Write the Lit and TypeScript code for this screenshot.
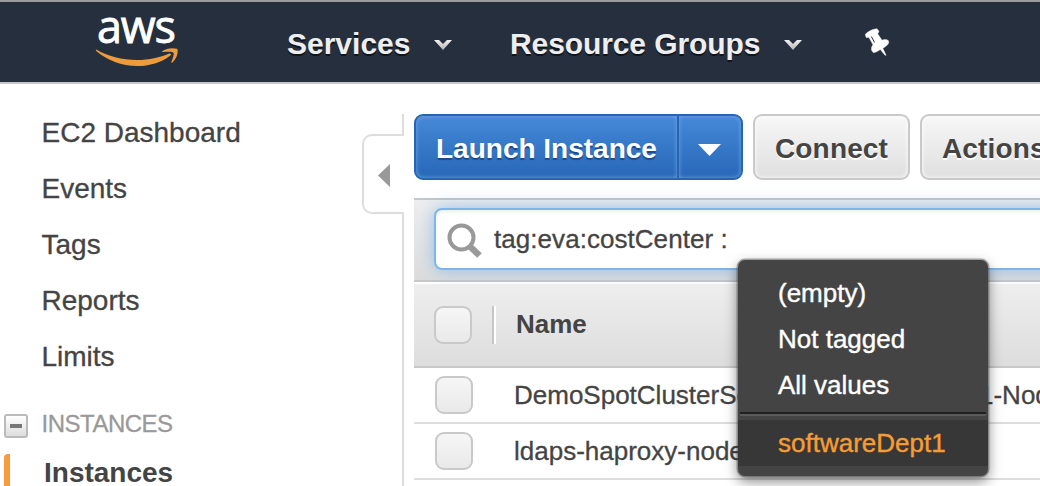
import { LitElement, html, css } from "lit";
import { customElement } from "lit/decorators.js";

const chevron = html`<svg class="chev" width="20" height="12" viewBox="0 0 20 12">
  <defs><linearGradient id="g" x1="0" y1="0" x2="0" y2="1"><stop offset="0" stop-color="#f2f2f2"/><stop offset="1" stop-color="#b2b2b2"/></linearGradient></defs>
  <path d="M1 1h5L10 5 14 1H19L10 11z" fill="url(#g)"/></svg>`;

@customElement("app-root")
export class AppRoot extends LitElement {
  static styles = css`
    :host { display: block; width: 1040px; height: 486px; overflow: hidden; position: relative; background: #fff; color: #444; font: 26px/1 "Liberation Sans", Arial, sans-serif; }
    * { box-sizing: border-box; }
    svg { display: block; flex: none; }
    .nav { height: 84px; background: #262f3e; border-top: 2px solid #9b9a9d; border-bottom: 2px solid #c6c7c9; display: flex; align-items: flex-start; color: #eee; font-weight: bold; font-size: 30px; text-shadow: 0 2px 0 #10151c; white-space: nowrap; }
    .logo { margin: 8px 0 0 92px; overflow: visible; }
    .logo text { font: 400 45px "Open Sans", "Noto Sans", sans-serif; text-shadow: none; stroke: #fff; stroke-width: 0.9px; }
    .navitem { display: flex; height: 30px; margin-top: 27px; }
    .services { margin-left: 105px; width: 223px; }
    .groups { width: 351px; letter-spacing: -0.1px; }
    .navitem span { flex: none; }
    .services span { width: 146px; }
    .groups span { width: 273px; }
    .chev { margin-top: 10px; }
    .pin { margin-top: 24px; }
    .body { display: flex; height: 402px; }
    .side { width: 362px; padding-top: 21px; flex: none; font-size: 28px; }
    .link, .group span, .search span, .name, .rest { -webkit-text-stroke: 0.3px; }
    .link { height: 56px; line-height: 56px; padding-left: 41.5px; }
    .group { display: flex; height: 56px; padding-left: 4px; margin-top: 11px; color: #999; font-size: 24px; letter-spacing: -0.5px; }
    .group span { line-height: 56px; margin-left: 13.500px; }
    .minus { width: 24px; height: 24px; margin-top: 18px; border: 2px solid #bbb; border-radius: 3px; background: linear-gradient(#fff, #ddd); display: flex; align-items: center; justify-content: center; }
    .minus i { width: 12px; height: 4px; background: #777; }
    .active { margin-left: 4px; margin-top: 2px; height: 36px; border-left: 6px solid #f79c3c; border-top-left-radius: 4px; padding-left: 34px; font-weight: bold; line-height: 37px; }
    .split { width: 42px; flex: none; display: flex; flex-direction: column; align-items: flex-end; padding-top: 30px; }
    .rule { width: 2px; background: #ddd; height: 20px; }
    .rule.long { flex: 1; height: auto; }
    .handle { width: 42px; height: 80px; border: 2px solid #ddd; border-right: 0; border-radius: 10px 0 0 10px; padding: 28px 0 0 13px; margin-bottom: -2px; background: #fff; }
    .main { margin-left: 10px; flex: 1; min-width: 0; overflow: hidden; padding-top: 30px; }
    .buttons { display: flex; gap: 11px; height: 84px; font-weight: bold; font-size: 28px; white-space: nowrap; }
    .btn { height: 66px; border: 2px solid #c9c9c9; border-radius: 9px; background: linear-gradient(#f7f7f7, #dfdfdf); box-shadow: inset 0 0 4px #fff; flex: none; line-height: 65px; text-shadow: 0 2px 0 #fff; letter-spacing: 0.15px; }
    .connect { width: 157px; padding-left: 20px; }
    .actions { width: 180px; padding-left: 20px; margin-left: -1px; }
    .launch { width: 329px; display: flex; color: #fff; border-color: #2565b3; background: linear-gradient(#4589d9, #2767b7); text-shadow: 0 2px 1px #1a4a8c; box-shadow: none; margin-right: -1px; letter-spacing: 0; }
    .label { width: 263px; padding-left: 20px; box-shadow: inset 0 0 4px #76a9e2; border-radius: 7px 0 0 7px; border-right: 2px solid #2565b3; }
    .drop { flex: 1; padding: 28px 0 0 19px; box-shadow: inset 0 0 4px #76a9e2; border-radius: 0 7px 7px 0; }
    .filter { height: 84px; border-top: 2px solid #c4c6c8; border-bottom: 2px solid #c8c8c8; background: linear-gradient(#eee, #dcdcdc); padding: 8px 0 0 20px; }
    .search { width: 640px; height: 62px; border: 2px solid #7db5ec; border-radius: 8px; background: #fff; box-shadow: 0 0 18px rgba(115, 172, 230, .7), inset 0 2px 3px #eee; display: flex; }
    .search svg { margin: 12px 0 0 10px; }
    .search span { margin-left: 10px; line-height: 58px; letter-spacing: 0.05px; }
    .head { margin-top: 2px; height: 84px; background: linear-gradient(#eee, #ddd); border-bottom: 2px solid #c8c8c8; padding: 22px 0 0 20px; display: flex; font-weight: bold; }
    .check { width: 38px; height: 38px; border: 2px solid #c9c9c9; border-radius: 9px; background: linear-gradient(#f6f6f6, #e9e9e9); flex: none; }
    .sep { width: 4px; height: 38px; border-left: 2px solid #c6c6c6; background: #fff; margin-left: 20px; }
    .head span { margin-left: 20px; line-height: 36px; }
    .row { height: 56px; border-bottom: 2px solid #ddd; display: flex; padding: 8px 0 0 21px; line-height: 38px; white-space: nowrap; }
    .row .name { margin-left: 41px; width: 465px; flex: none; }
    .menu { position: absolute; left: 738px; top: 260px; width: 250px; height: 216px; border-radius: 7px; background: #444; color: #fff; padding-top: 10px; box-shadow: 0 0 0 1.5px rgba(70, 70, 70, .45), 0 5px 13px rgba(0, 0, 0, .5); }
    .item { height: 46px; line-height: 46px; padding-left: 40px; -webkit-text-stroke: 0.4px; }
    .line { height: 4px; margin: 4px 2px; background: #5a5a5a; border-top: 2px solid #202020; }
    .picked { background: #373737; color: #f79c34; }
  `;

  render() {
    return html`
      <header class="nav">
        <svg class="logo" width="90" height="60" viewBox="92 10 90 60">
          <text x="97" y="42.5" fill="#fff" textLength="79" lengthAdjust="spacing">aws</text>
          <path fill="#ee9b3c" d="M96.2 49.6C108 56.5 122 60 137 60c12 0 23-2.600 32.200-6.500 1.500-.5 2.500.8 1.200 1.900C161.500 62.500 149 66 137.500 66 121.500 66 107 60 96.500 51.200c-.8-.8-1-1.600-.3-1.600z"/>
          <path fill="#ee9b3c" d="M162.500 51c3.500-2.600 9.500-3.600 14.500-2.200 1.600 1.200.8 9.200-4.600 13.700-.7.600-1.400.3-1.100-.5 1.200-3 3-7.700 2.200-9.100-1-1.500-6-1-10.600-.8-.9 0-1.100-.6-.4-1.100z"/>
        </svg>
        <div class="navitem services"><span>Services</span>${chevron}</div>
        <div class="navitem groups"><span>Resource Groups</span>${chevron}</div>
        <svg class="pin" width="30" height="32" viewBox="861 26 30 32">
          <path fill="#fff" stroke="#fff" stroke-width=".4" stroke-linejoin="round" d="M865.300 34.200C868 31.500 873 28.700 877 28.700l2 2.500-1.200 2.700 4.200 6.300c2-1 5-.8 6.500.5l.2 2.300c-1.400 2.300-3.400 4.200-5.900 5.300l3.300 7-1.100-.1-4.700-5.700c-2 1.600-4.400 2.800-6.900 3.200l-1.700-2.100c-.5-2.200-.3-4.100 1.300-5.800l-4-7.200-2.900-.2z"/>
          <path d="M871.300 36.500l3.300 6" stroke="#262f3e" stroke-width="1" fill="none"/>
        </svg>
      </header>
      <div class="body">
        <nav class="side">
          ${["EC2 Dashboard", "Events", "Tags", "Reports", "Limits"].map((t) => html`<div class="link">${t}</div>`)}
          <div class="group"><div class="minus"><i></i></div><span>INSTANCES</span></div>
          <div class="active">Instances</div>
        </nav>
        <div class="split">
          <div class="rule"></div>
          <div class="handle"><svg width="14" height="24" viewBox="0 0 14 24"><path d="M13 0v23L1 11.500z" fill="#999"/></svg></div>
          <div class="rule long"></div>
        </div>
        <main class="main">
          <div class="buttons">
            <div class="btn launch"><div class="label">Launch Instance</div>
              <div class="drop"><svg width="24" height="13" viewBox="0 0 24 13"><path d="M0 0h23L11.500 12z" fill="#fff"/></svg></div></div>
            <div class="btn connect">Connect</div>
            <div class="btn actions">Actions</div>
          </div>
          <div class="filter"><div class="search">
            <svg width="38" height="38" viewBox="446 222 38 38"><circle cx="461.500" cy="237.500" r="12" fill="none" stroke="#999" stroke-width="4"/><path d="M470.500 247l9 8.500" stroke="#999" stroke-width="6.500"/></svg>
            <span>tag:eva:costCenter :</span></div></div>
          <div class="head"><div class="check"></div><div class="sep"></div><span>Name</span></div>
          <div class="row"><div class="check"></div><div class="name">DemoSpotClusterSe</div><div class="rest">1-Node</div></div>
          <div class="row"><div class="check"></div><div class="name">ldaps-haproxy-node</div></div>
        </main>
      </div>
      <div class="menu">
        <div class="item">(empty)</div><div class="item">Not tagged</div><div class="item">All values</div>
        <div class="line"></div>
        <div class="item picked">softwareDept1</div>
      </div>`;
  }
}
